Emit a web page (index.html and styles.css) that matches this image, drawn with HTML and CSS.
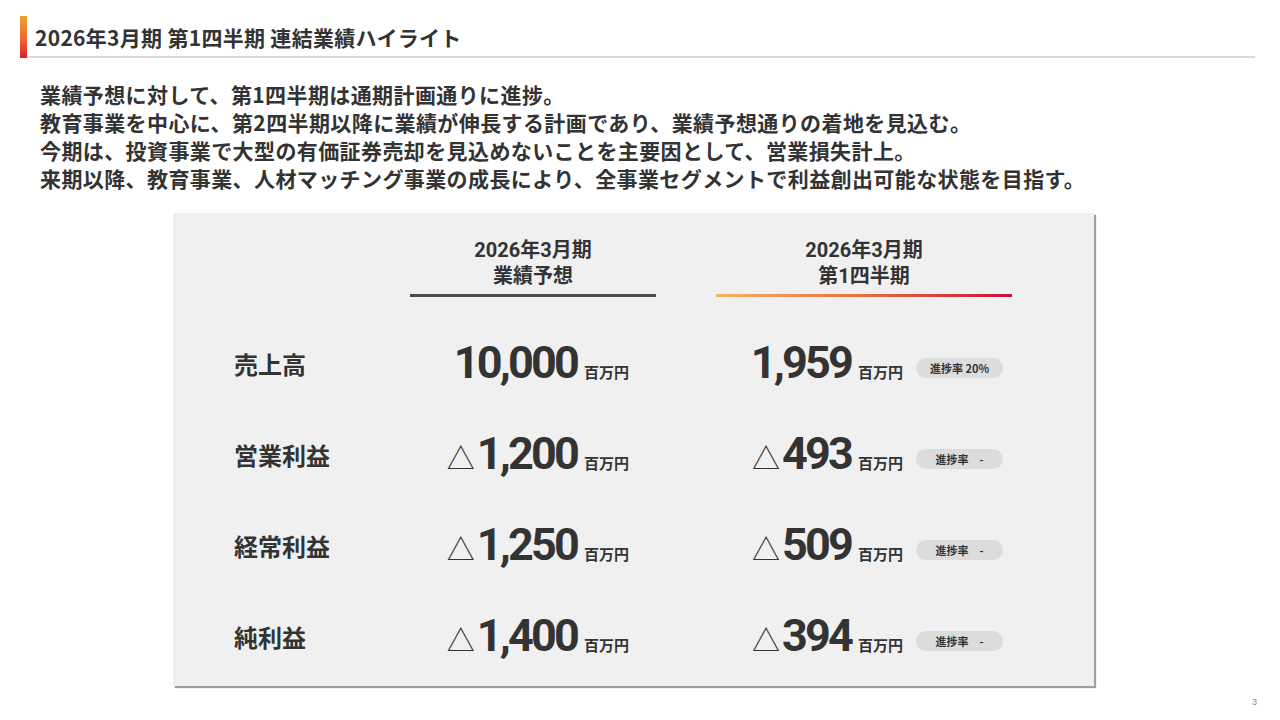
FILE: index.html
```html
<!DOCTYPE html>
<html lang="ja">
<head>
<meta charset="utf-8">
<title>2026年3月期 第1四半期 連結業績ハイライト</title>
<link rel="stylesheet" href="styles.css">
</head>
<body>
<div class="slide">
  <header class="title-bar">
    <div class="accent"></div>
    <h1 class="title">2026年3月期 第1四半期 連結業績ハイライト</h1>
  </header>
  <div class="summary">
    <p>業績予想に対して、第1四半期は通期計画通りに進捗。</p>
    <p>教育事業を中心に、第2四半期以降に業績が伸長する計画であり、業績予想通りの着地を見込む。</p>
    <p>今期は、投資事業で大型の有価証券売却を見込めないことを主要因として、営業損失計上。</p>
    <p>来期以降、教育事業、人材マッチング事業の成長により、全事業セグメントで利益創出可能な状態を目指す。</p>
  </div>
  <section class="card">
    <div class="col-heads">
      <div class="col-head plan"><div class="hl">2026年3月期</div><div class="hl">業績予想</div></div>
      <div class="col-head actual"><div class="hl">2026年3月期</div><div class="hl">第1四半期</div></div>
    </div>
    <div class="table">
      <div class="label">売上高</div>
      <div class="fig fig1"><span class="num">10,000</span><span class="unit">百万円</span></div>
      <div class="fig fig2"><span class="num">1,959</span><span class="unit">百万円</span><span class="badge">進捗率 20%</span></div>

      <div class="label">営業利益</div>
      <div class="fig fig1"><span class="num"><span class="tri">△</span>1,200</span><span class="unit">百万円</span></div>
      <div class="fig fig2"><span class="num"><span class="tri">△</span>493</span><span class="unit">百万円</span><span class="badge">進捗率　-</span></div>

      <div class="label">経常利益</div>
      <div class="fig fig1"><span class="num"><span class="tri">△</span>1,250</span><span class="unit">百万円</span></div>
      <div class="fig fig2"><span class="num"><span class="tri">△</span>509</span><span class="unit">百万円</span><span class="badge">進捗率　-</span></div>

      <div class="label">純利益</div>
      <div class="fig fig1"><span class="num"><span class="tri">△</span>1,400</span><span class="unit">百万円</span></div>
      <div class="fig fig2"><span class="num"><span class="tri">△</span>394</span><span class="unit">百万円</span><span class="badge">進捗率　-</span></div>
    </div>
  </section>
  <footer class="page-no">3</footer>
</div>
</body>
</html>
```
FILE: styles.css
```css
* { box-sizing: border-box; margin: 0; padding: 0; }
html, body { width: 1280px; height: 720px; background: #ffffff; overflow: hidden; }
body {
  font-family: "Noto Sans CJK JP", "Noto Sans", sans-serif;
  color: #333333;
}
.slide { width: 1280px; height: 720px; }

.title-bar {
  display: flex;
  padding: 16px 25px 0 20px;
  height: 58px;
}
.accent {
  width: 7px;
  height: 42px;
  background: linear-gradient(to bottom, #f2a23a 0%, #ec6a2c 55%, #dc1f2e 100%);
}
.title {
  flex: 1;
  height: 42px;
  padding-left: 8px;
  border-bottom: 2px solid #d9d9d9;
  font-size: 21px;
  font-weight: 700;
  letter-spacing: 0.3px;
  line-height: 42px;
  color: #333333;
}

.summary {
  margin: 22px 0 0 40px;
  font-size: 21px;
  font-weight: 700;
  letter-spacing: 0.4px;
  line-height: 28px;
  color: #333333;
}

.card {
  margin: 21px 0 0 173px;
  width: 921px;
  height: 473px;
  background: #f0f0f0;
  box-shadow: 2px 2px 1px rgba(0, 0, 0, 0.38);
  padding: 24px 0 0 61px;
}

.col-heads {
  display: flex;
  gap: 60px;
  padding-left: 176px;
}
.col-head {
  font-family: Roboto, "Noto Sans CJK JP", sans-serif;
  font-size: 20px;
  font-weight: 700;
  text-align: center;
  padding-bottom: 5px;
  border-bottom: 3px solid transparent;
}
.hl { height: 26px; line-height: 26px; }
.col-head.plan {
  width: 246px;
  border-image: linear-gradient(#4a4a4a, #4a4a4a) 1;
}
.col-head.actual {
  width: 296px;
  border-image: linear-gradient(to right, #f5b363 0%, #ea6d3e 50%, #c4123a 100%) 1;
}

.table {
  margin-top: 20px;
  display: grid;
  grid-template-columns: 170px 310px auto;
  grid-auto-rows: 91px;
  align-items: center;
}
.label {
  font-size: 24px;
  font-weight: 700;
  line-height: 30px;
  padding-top: 2px;
}
.fig {
  display: flex;
  align-items: baseline;
}
.num {
  font-family: Roboto, "Liberation Sans", sans-serif;
  font-size: 45px;
  font-weight: 700;
  letter-spacing: -2.8px;
  line-height: 1;
  text-align: right;
  color: #333333;
}
.fig1 .num { width: 173px; }
.fig2 .num { width: 137px; }
.tri {
  font-family: "Noto Sans CJK JP", sans-serif;
  font-weight: 400;
  font-size: 28px;
  letter-spacing: 0;
  margin-right: 2px;
}
.unit {
  margin-left: 7px;
  font-size: 15px;
  font-weight: 700;
  line-height: 1;
}
.badge {
  align-self: flex-end;
  margin: 0 0 7px 13px;
  width: 87px;
  height: 20px;
  border-radius: 10px;
  background: #dcdcdc;
  font-size: 11px;
  font-weight: 700;
  line-height: 20px;
  text-align: center;
  white-space: pre;
}

.page-no {
  margin-top: 10px;
  padding-right: 23px;
  text-align: right;
  font-family: "Liberation Sans", sans-serif;
  font-size: 9px;
  line-height: 12px;
  color: #888888;
}
```
